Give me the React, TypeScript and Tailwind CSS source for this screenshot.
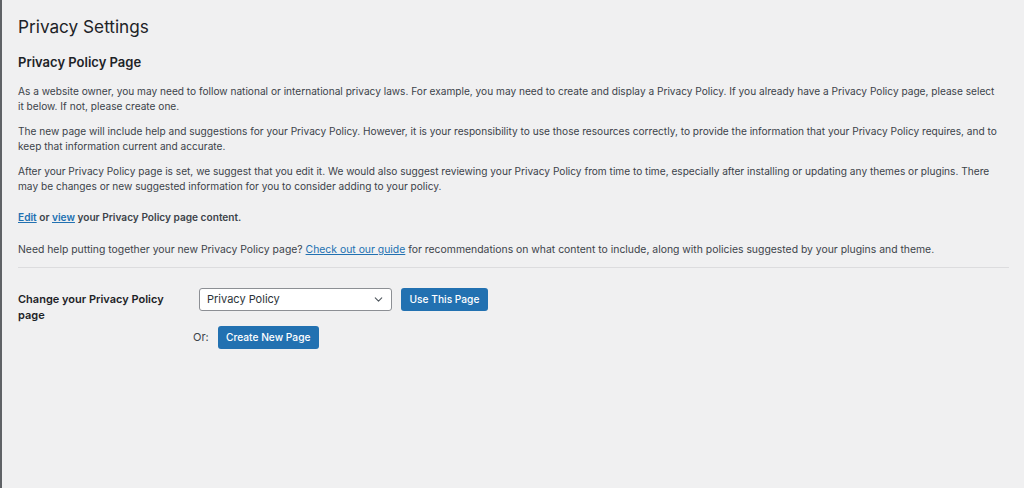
import { ChevronDown } from 'lucide-react';

const paragraphs: string[][] = [
  [
    'As a website owner, you may need to follow national or international privacy laws. For example, you may need to create and display a Privacy Policy. If you already have a Privacy Policy page, please select',
    'it below. If not, please create one.',
  ],
  [
    'The new page will include help and suggestions for your Privacy Policy. However, it is your responsibility to use those resources correctly, to provide the information that your Privacy Policy requires, and to',
    'keep that information current and accurate.',
  ],
  [
    'After your Privacy Policy page is set, we suggest that you edit it. We would also suggest reviewing your Privacy Policy from time to time, especially after installing or updating any themes or plugins. There',
    'may be changes or new suggested information for you to consider adding to your policy.',
  ],
];

export default function App() {
  return (
    <div className="min-h-[488px] w-full border-l-2 border-[#5f6266] bg-[#f0f0f1] font-['Inter','Liberation_Sans',sans-serif] text-[#3c434a]">
      <div className="pl-4 pr-[15px] pt-[13px]">
        <h1 className="text-[17.2px] leading-[28px] font-normal text-[#1d2327]">Privacy Settings</h1>

        <h2 className="mt-[11px] text-[13px] leading-[20px] font-semibold text-[#1d2327]">Privacy Policy Page</h2>

        <div className="mt-[12px] text-[10.15px] leading-[15px]">
          {paragraphs.map((lines, i) => (
            <p key={i} className="mb-[10px] whitespace-nowrap">
              {lines.map((line, j) => (
                <span key={j} className="block">
                  {line}
                </span>
              ))}
            </p>
          ))}

          <p className="mt-[16px] font-semibold">
            <a href="#" className="text-[#2271b1] underline">Edit</a> or{' '}
            <a href="#" className="text-[#2271b1] underline">view</a> your Privacy Policy page content.
          </p>

          <p className="mt-[17px] whitespace-nowrap text-[10.4px]">
            Need help putting together your new Privacy Policy page?{' '}
            <a href="#" className="text-[#2271b1] underline">Check out our guide</a> for recommendations on what content to
            include, along with policies suggested by your plugins and theme.
          </p>
        </div>

        <hr className="mt-[10px] border-t border-[#dcdcde]" />

        <div className="mt-[20px] flex">
          <div className="w-[181px] pt-[3px] text-[11px] leading-[16px] font-semibold text-[#1d2327]">
            Change your Privacy Policy
            <br />
            page
          </div>
          <div className="flex flex-col">
            <div className="flex items-center gap-[9px]">
              <div className="flex h-[23px] w-[193px] items-center justify-between rounded-[3px] border border-[#8c8f94] bg-white pl-[7px] pr-[6px] text-[11px] text-[#2c3338]">
                <span>Privacy Policy</span>
                <ChevronDown className="h-[13px] w-[13px] text-[#50575e]" strokeWidth={2} />
              </div>
              <button
                type="button"
                className="h-[23px] w-[87px] rounded-[3px] bg-[#2271b1] text-[10.2px] font-medium text-white"
              >
                Use This Page
              </button>
            </div>
            <div className="-ml-[6px] mt-[15px] flex items-center gap-[9px]">
              <span className="text-[11px]">Or:</span>
              <button
                type="button"
                className="h-[23px] w-[101px] rounded-[3px] bg-[#2271b1] text-[10.2px] font-medium text-white"
              >
                Create New Page
              </button>
            </div>
          </div>
        </div>
      </div>
    </div>
  );
}
